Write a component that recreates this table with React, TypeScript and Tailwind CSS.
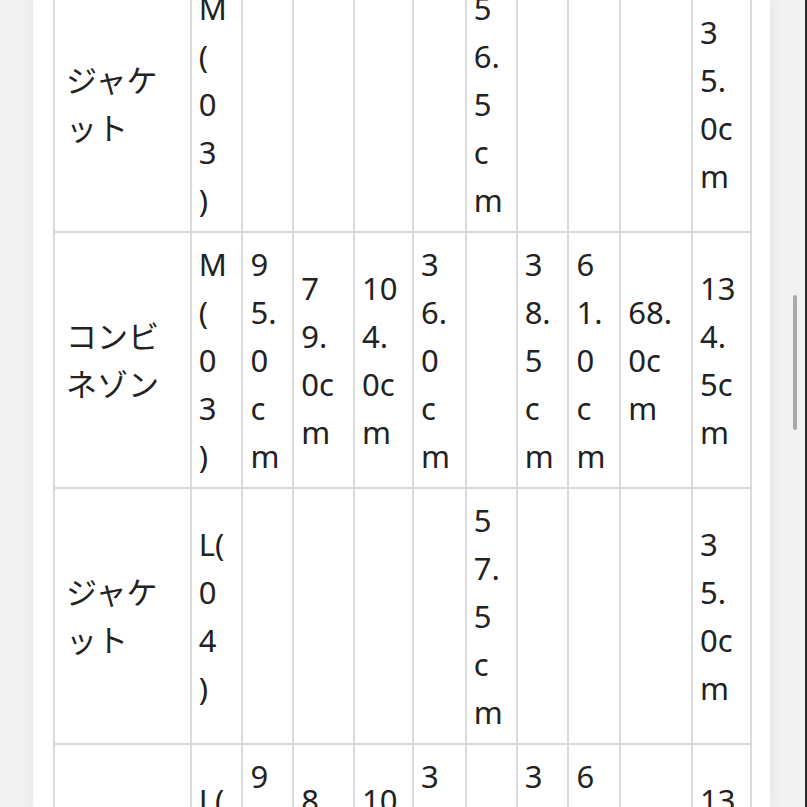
import React from 'react';

type Row = string[][];

// each cell is a list of lines, as the narrow columns wrap them
const rows: Row[] = [
  [
    ['ジャケ', 'ット'],
    ['M', '(', '0', '3', ')'],
    [],
    [],
    [],
    [],
    ['5', '6.', '5', 'c', 'm'],
    [],
    [],
    [],
    ['3', '5.', '0c', 'm'],
  ],
  [
    ['コンビ', 'ネゾン'],
    ['M', '(', '0', '3', ')'],
    ['9', '5.', '0', 'c', 'm'],
    ['7', '9.', '0c', 'm'],
    ['10', '4.', '0c', 'm'],
    ['3', '6.', '0', 'c', 'm'],
    [],
    ['3', '8.', '5', 'c', 'm'],
    ['6', '1.', '0', 'c', 'm'],
    ['68.', '0c', 'm'],
    ['13', '4.', '5c', 'm'],
  ],
  [
    ['ジャケ', 'ット'],
    ['L(', '0', '4', ')'],
    [],
    [],
    [],
    [],
    ['5', '7.', '5', 'c', 'm'],
    [],
    [],
    [],
    ['3', '5.', '0c', 'm'],
  ],
  [
    ['コンビ', 'ネゾン'],
    ['L(', '0', '4', ')'],
    ['9', '8.', '0', 'c', 'm'],
    ['8', '2.', '0c', 'm'],
    ['10', '8.', '0c', 'm'],
    ['3', '7.', '0', 'c', 'm'],
    [],
    ['3', '9.', '5', 'c', 'm'],
    ['6', '2.', '0', 'c', 'm'],
    ['70.', '0c', 'm'],
    ['13', '8.', '0c', 'm'],
  ],
];

const widths = [137, 52, 51, 61, 59, 53, 51, 52, 52, 72, 59];

export default function App() {
  return (
    <div
      className="relative flex h-[807px] w-[807px] overflow-hidden bg-[#f2f2f2] text-[#222]"
      style={{ fontFamily: '"Noto Sans", "Noto Sans CJK JP", sans-serif' }}
    >
      <div className="w-[33px] shrink-0" />

      <div className="w-[737px] shrink-0 bg-white pl-[20px] pr-[18px] shadow-[0_0_14px_rgba(0,0,0,0.07)]">
        <table className="mt-[-25px] table-fixed border-collapse text-[31px] leading-[48px]">
          <colgroup>
            {widths.map((w, i) => (
              <col key={i} style={{ width: w }} />
            ))}
          </colgroup>
          <tbody>
            {rows.map((row, r) => (
              <tr key={r}>
                {row.map((lines, c) => (
                  <td
                    key={c}
                    className={`border-2 border-[#dadada] py-[7px] align-middle whitespace-nowrap ${
                      c === 0 ? 'pl-[11px] pr-2' : 'pl-[7px] pr-1'
                    }`}
                  >
                    {lines.map((l, k) => (
                      <div key={k}>{l}</div>
                    ))}
                  </td>
                ))}
              </tr>
            ))}
          </tbody>
        </table>
      </div>

      <div className="flex-1" />
      <div className="w-[2px] shrink-0 bg-[#2a2a2a]" />

      {/* scrollbar thumb */}
      <div className="absolute right-[10px] top-[295px] h-[135px] w-[4px] rounded-full bg-[#a9a9a9]" />
    </div>
  );
}
